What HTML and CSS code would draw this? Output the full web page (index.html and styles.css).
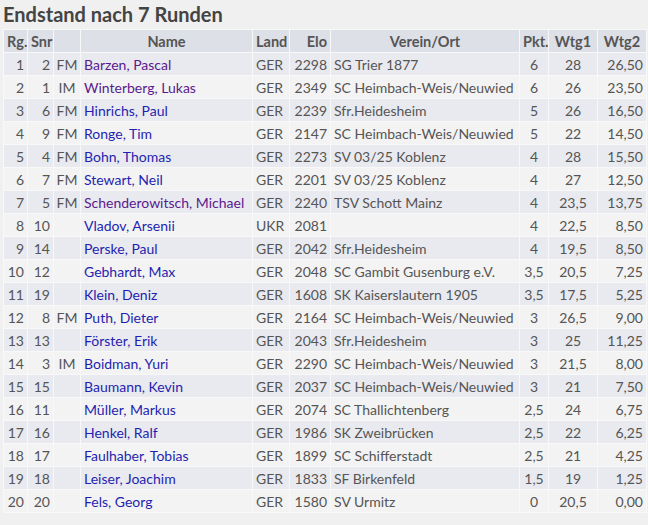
FILE: index.html
```html
<!DOCTYPE html>
<html lang="de">
<head>
<meta charset="utf-8">
<title>Endstand</title>
<link rel="stylesheet" href="styles.css">
</head>
<body>
<h2 class="title">Endstand nach 7 Runden</h2>
<table class="standings">
<colgroup>
<col class="c-rg"><col class="c-snr"><col class="c-tit"><col class="c-name"><col class="c-land"><col class="c-elo"><col class="c-club"><col class="c-pkt"><col class="c-w1"><col class="c-w2">
</colgroup>
<thead>
<tr><th class="r">Rg.</th><th class="r">Snr</th><th></th><th>Name</th><th class="l">Land</th><th class="r">Elo</th><th>Verein/Ort</th><th>Pkt.</th><th>Wtg1</th><th>Wtg2</th></tr>
</thead>
<tbody>
<tr><td class="r">1</td><td class="r">2</td><td class="t">FM</td><td><a class="v">Barzen, Pascal</a></td><td>GER</td><td class="r">2298</td><td>SG Trier 1877</td><td class="c">6</td><td class="c">28</td><td class="r">26,50</td></tr>
<tr><td class="r">2</td><td class="r">1</td><td class="t">IM</td><td><a class="v">Winterberg, Lukas</a></td><td>GER</td><td class="r">2349</td><td>SC Heimbach-Weis/Neuwied</td><td class="c">6</td><td class="c">26</td><td class="r">23,50</td></tr>
<tr><td class="r">3</td><td class="r">6</td><td class="t">FM</td><td><a>Hinrichs, Paul</a></td><td>GER</td><td class="r">2239</td><td>Sfr.Heidesheim</td><td class="c">5</td><td class="c">26</td><td class="r">16,50</td></tr>
<tr><td class="r">4</td><td class="r">9</td><td class="t">FM</td><td><a>Ronge, Tim</a></td><td>GER</td><td class="r">2147</td><td>SC Heimbach-Weis/Neuwied</td><td class="c">5</td><td class="c">22</td><td class="r">14,50</td></tr>
<tr><td class="r">5</td><td class="r">4</td><td class="t">FM</td><td><a>Bohn, Thomas</a></td><td>GER</td><td class="r">2273</td><td>SV 03/25 Koblenz</td><td class="c">4</td><td class="c">28</td><td class="r">15,50</td></tr>
<tr><td class="r">6</td><td class="r">7</td><td class="t">FM</td><td><a>Stewart, Neil</a></td><td>GER</td><td class="r">2201</td><td>SV 03/25 Koblenz</td><td class="c">4</td><td class="c">27</td><td class="r">12,50</td></tr>
<tr><td class="r">7</td><td class="r">5</td><td class="t">FM</td><td><a class="v">Schenderowitsch, Michael</a></td><td>GER</td><td class="r">2240</td><td>TSV Schott Mainz</td><td class="c">4</td><td class="c">23,5</td><td class="r">13,75</td></tr>
<tr><td class="r">8</td><td class="r">10</td><td class="t"></td><td><a>Vladov, Arsenii</a></td><td>UKR</td><td class="r">2081</td><td></td><td class="c">4</td><td class="c">22,5</td><td class="r">8,50</td></tr>
<tr><td class="r">9</td><td class="r">14</td><td class="t"></td><td><a>Perske, Paul</a></td><td>GER</td><td class="r">2042</td><td>Sfr.Heidesheim</td><td class="c">4</td><td class="c">19,5</td><td class="r">8,50</td></tr>
<tr><td class="r">10</td><td class="r">12</td><td class="t"></td><td><a>Gebhardt, Max</a></td><td>GER</td><td class="r">2048</td><td>SC Gambit Gusenburg e.V.</td><td class="c">3,5</td><td class="c">20,5</td><td class="r">7,25</td></tr>
<tr><td class="r">11</td><td class="r">19</td><td class="t"></td><td><a>Klein, Deniz</a></td><td>GER</td><td class="r">1608</td><td>SK Kaiserslautern 1905</td><td class="c">3,5</td><td class="c">17,5</td><td class="r">5,25</td></tr>
<tr><td class="r">12</td><td class="r">8</td><td class="t">FM</td><td><a>Puth, Dieter</a></td><td>GER</td><td class="r">2164</td><td>SC Heimbach-Weis/Neuwied</td><td class="c">3</td><td class="c">26,5</td><td class="r">9,00</td></tr>
<tr><td class="r">13</td><td class="r">13</td><td class="t"></td><td><a>Förster, Erik</a></td><td>GER</td><td class="r">2043</td><td>Sfr.Heidesheim</td><td class="c">3</td><td class="c">25</td><td class="r">11,25</td></tr>
<tr><td class="r">14</td><td class="r">3</td><td class="t">IM</td><td><a>Boidman, Yuri</a></td><td>GER</td><td class="r">2290</td><td>SC Heimbach-Weis/Neuwied</td><td class="c">3</td><td class="c">21,5</td><td class="r">8,00</td></tr>
<tr><td class="r">15</td><td class="r">15</td><td class="t"></td><td><a>Baumann, Kevin</a></td><td>GER</td><td class="r">2037</td><td>SC Heimbach-Weis/Neuwied</td><td class="c">3</td><td class="c">21</td><td class="r">7,50</td></tr>
<tr><td class="r">16</td><td class="r">11</td><td class="t"></td><td><a>Müller, Markus</a></td><td>GER</td><td class="r">2074</td><td>SC Thallichtenberg</td><td class="c">2,5</td><td class="c">24</td><td class="r">6,75</td></tr>
<tr><td class="r">17</td><td class="r">16</td><td class="t"></td><td><a>Henkel, Ralf</a></td><td>GER</td><td class="r">1986</td><td>SK Zweibrücken</td><td class="c">2,5</td><td class="c">22</td><td class="r">6,25</td></tr>
<tr><td class="r">18</td><td class="r">17</td><td class="t"></td><td><a>Faulhaber, Tobias</a></td><td>GER</td><td class="r">1899</td><td>SC Schifferstadt</td><td class="c">2,5</td><td class="c">21</td><td class="r">4,25</td></tr>
<tr><td class="r">19</td><td class="r">18</td><td class="t"></td><td><a>Leiser, Joachim</a></td><td>GER</td><td class="r">1833</td><td>SF Birkenfeld</td><td class="c">1,5</td><td class="c">19</td><td class="r">1,25</td></tr>
<tr><td class="r">20</td><td class="r">20</td><td class="t"></td><td><a>Fels, Georg</a></td><td>GER</td><td class="r">1580</td><td>SV Urmitz</td><td class="c">0</td><td class="c">20,5</td><td class="r">0,00</td></tr>
</tbody>
</table>
<p class="legend">Anmerkungen</p>
</body>
</html>
```

FILE: styles.css
```css
html, body {
  margin: 0;
  padding: 0;
  background: #f0f0f0;
}
body {
  padding: 3px 2px 0 3px;
  font-family: Lato, "Open Sans", sans-serif;
  font-size: 14px;
  color: #555;
}
.title {
  margin: 0 0 4px 0;
  font-size: 20px;
  font-weight: bold;
  color: #444;
  line-height: 22px;
}
.standings {
  border-collapse: collapse;
  table-layout: fixed;
  width: 643px;
}
.c-rg { width: 24px; }
.c-snr { width: 26px; }
.c-tit { width: 27px; }
.c-name { width: 172px; }
.c-land { width: 37px; }
.c-elo { width: 41px; }
.c-club { width: 189px; }
.c-pkt { width: 29px; }
.c-w1 { width: 49px; }
.c-w2 { width: 49px; }
.standings th,
.standings td {
  border: 1px solid #f8f8f8;
  padding: 0 3px;
  height: 22px;
  white-space: nowrap;
  overflow: hidden;
}
.standings th {
  background: #dde0e7;
  font-weight: bold;
  font-size: 14.5px;
  color: #555;
  text-align: center;
}
.standings tbody tr:nth-child(odd) td { background: #e9eaef; }
.standings tbody tr:nth-child(even) td { background: #f3f3f3; }
.standings .r { text-align: right; }
.standings .l { text-align: left; }
.standings .c { text-align: center; }
.standings .t { text-align: center; padding: 0; }
.standings a { color: #1f1fb0; text-decoration: none; }
.standings a.v { color: #5a1a8e; }
.legend {
  margin: 8px 0 0 0;
  font-weight: bold;
  font-size: 17px;
  color: #444;
}
```
